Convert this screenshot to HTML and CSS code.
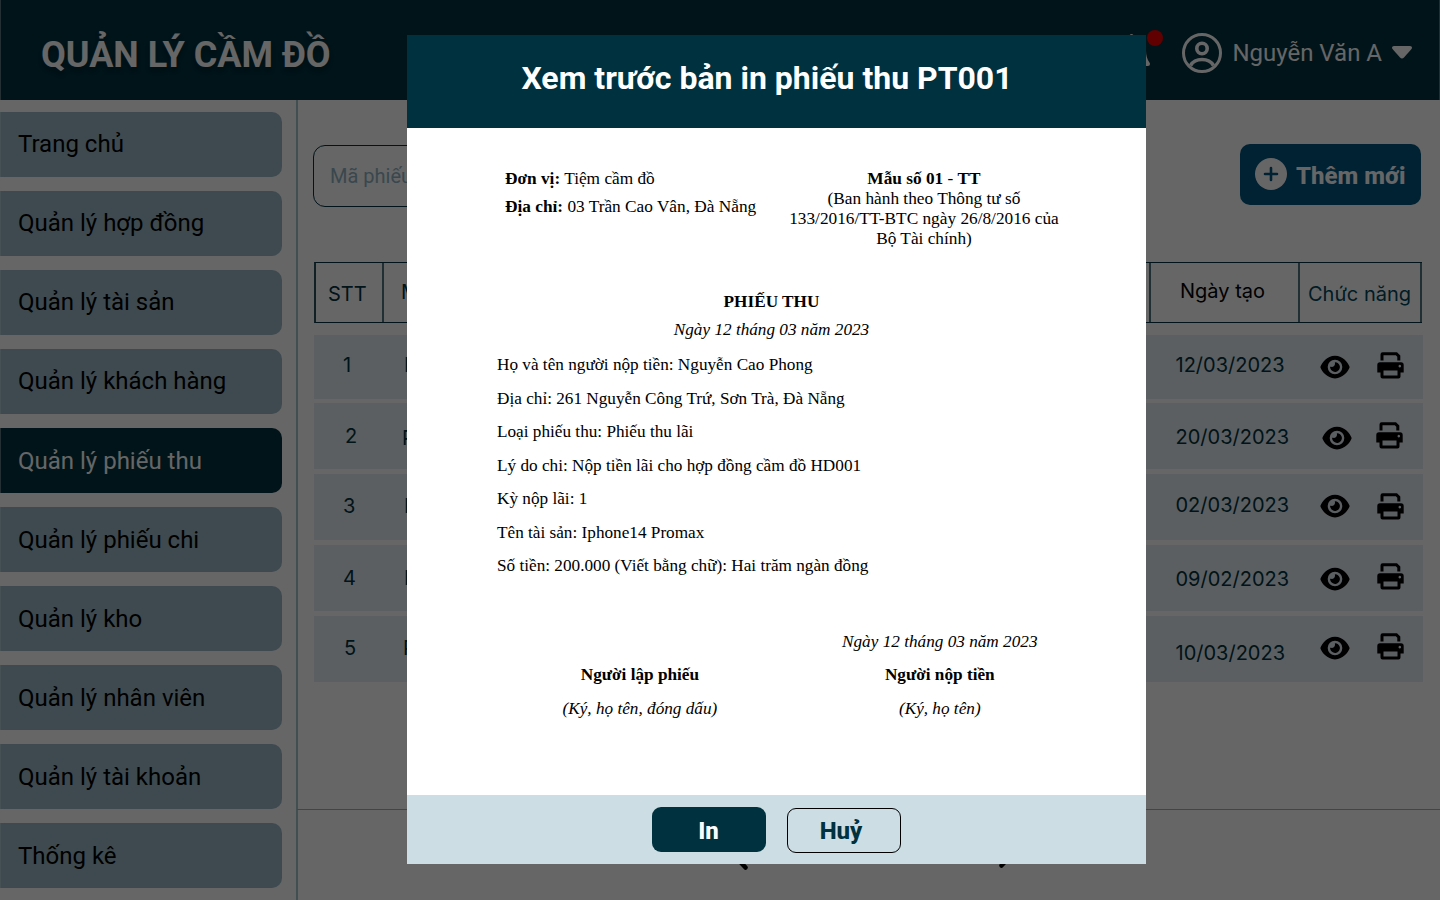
FILE: index.html
```html
<!DOCTYPE html>
<html lang="vi">
<head>
<meta charset="utf-8">
<title>Quản lý cầm đồ</title>
<link rel="stylesheet" href="styles.css">
</head>
<body>
<svg class="defs" width="0" height="0">
  <symbol id="eye" viewBox="0 0 576 512"><path d="M288 32c-81 0-145 37-192 80C49 156 18 208 3 244c-3 8-3 17 0 25 15 35 46 87 93 131 47 43 111 80 192 80s145-37 192-80c47-44 78-96 93-131 3-8 3-17 0-25-15-36-46-88-93-132-47-43-111-80-192-80zM144 256a144 144 0 1 1 288 0 144 144 0 1 1-288 0zm144-64c0 35-29 64-64 64-7 0-14-1-20-3-6-2-12 1-12 7 0 7 1 14 3 21 14 51 67 82 118 68s82-67 68-118c-11-41-48-69-89-71-6 0-9 6-7 12 2 6 3 13 3 20z"/></symbol>
  <symbol id="printer" viewBox="0 0 27 27"><path fill-rule="evenodd" d="M3.500 8.600V2.500Q3.500 .3 5.700 .3H20L23.300 3.600V8.600H20.300V4.800L18.800 3.300H6.500V8.600ZM3 10.200H24Q26.700 10.200 26.700 13V20.500H23.500V24.500Q23.500 26.500 21.500 26.500H5.500Q3.500 26.500 3.500 24.500V20.500H.3V13Q.3 10.200 3 10.200ZM6.500 18.500V23.500H20.500V18.500ZM22.800 12.800a1.300 1.300 0 1 0 .01 0Z"/></symbol>
</svg>
<div class="app">
  <header class="topbar">
    <h1 class="brand">QUẢN LÝ CẦM ĐỒ</h1>
    <div class="user">
      <div class="bell">
        <svg width="38" height="38" viewBox="0 0 38 38" fill="none" stroke="#fff" stroke-width="4" stroke-linejoin="round" stroke-linecap="round"><path d="M17.500 2v3M19 5C11 5 8 11 8 17c0 6-2 9-5 13h31c-3-4-4-7-4-13 0-6-3-12-11-12zM15 35h8"/></svg>
        <span class="dot"></span>
      </div>
      <svg class="avatar" width="40" height="40" viewBox="0 0 40 40" fill="none" stroke="#fff"><circle cx="20" cy="20" r="18.500" stroke-width="3"/><circle cx="20" cy="15.500" r="5.200" stroke-width="3.600"/><path d="M8.500 32.500Q12 26.500 20 26.500T31.500 32.500" stroke-width="3.600"/></svg>
      <span class="name">Nguyễn Văn A</span>
      <svg class="caret" width="20" height="13" viewBox="0 0 20 13"><path d="M2 0H18Q21 .5 19.500 3L12 11.500Q10 13.500 8 11.500L.5 3Q-1 .5 2 0Z" fill="#fff"/></svg>
    </div>
  </header>
  <div class="body">
    <nav class="side">
      <a class="item">Trang chủ</a>
      <a class="item">Quản lý hợp đồng</a>
      <a class="item">Quản lý tài sản</a>
      <a class="item">Quản lý khách hàng</a>
      <a class="item active">Quản lý phiếu thu</a>
      <a class="item">Quản lý phiếu chi</a>
      <a class="item">Quản lý kho</a>
      <a class="item">Quản lý nhân viên</a>
      <a class="item">Quản lý tài khoản</a>
      <a class="item">Thống kê</a>
    </nav>
    <main class="main">
      <div class="tools">
        <div class="search">Mã phiếu</div>
        <button class="add"><svg width="32" height="32" viewBox="0 0 32 32"><circle cx="16" cy="16" r="16" fill="#fff"/><path d="M16 10v12M10 16h12" stroke="#00557f" stroke-width="2.600" stroke-linecap="round"/></svg><span>Thêm mới</span></button>
      </div>
      <div class="thead">
        <div class="th stt">STT</div><div class="th code">Mã</div><div class="th date">Ngày tạo</div><div class="th act">Chức năng</div>
      </div>
      <div class="rows">
        <div class="row r1"><span class="n">1</span><span class="c">PT001</span><span class="d">12/03/2023</span><svg class="eye"><use href="#eye"/></svg><svg class="print"><use href="#printer"/></svg></div>
        <div class="row r2"><span class="n">2</span><span class="c">PT002</span><span class="d">20/03/2023</span><svg class="eye"><use href="#eye"/></svg><svg class="print"><use href="#printer"/></svg></div>
        <div class="row r3"><span class="n">3</span><span class="c">PT003</span><span class="d">02/03/2023</span><svg class="eye"><use href="#eye"/></svg><svg class="print"><use href="#printer"/></svg></div>
        <div class="row r4"><span class="n">4</span><span class="c">PT004</span><span class="d">09/02/2023</span><svg class="eye"><use href="#eye"/></svg><svg class="print"><use href="#printer"/></svg></div>
        <div class="row r5"><span class="n">5</span><span class="c">PT005</span><span class="d">10/03/2023</span><svg class="eye"><use href="#eye"/></svg><svg class="print"><use href="#printer"/></svg></div>
      </div>
      <div class="pager">
        <svg width="22" height="40" viewBox="0 0 22 40"><path d="M19.500 2.500L3 20L19.500 37.500"/></svg>
        <svg class="next" width="22" height="40" viewBox="0 0 22 40"><path d="M2.500 2.500L19 20L2.500 37.500"/></svg>
      </div>
    </main>
  </div>
</div>
<div class="overlay">
  <section class="modal">
    <h2 class="mhead">Xem trước bản in phiếu thu PT001</h2>
    <div class="doc">
      <div class="dtop">
        <div class="unit"><p><b>Đơn vị:</b> Tiệm cầm đồ</p><p><b>Địa chỉ:</b> 03 Trần Cao Vân, Đà Nẵng</p></div>
        <div class="form"><b>Mẫu số 01</b> - <b>TT</b><br>(Ban hành theo Thông tư số<br>133/2016/TT-BTC ngày 26/8/2016 của<br>Bộ Tài chính)</div>
      </div>
      <div class="dtitle"><b>PHIẾU THU</b><i>Ngày 12 tháng 03 năm 2023</i></div>
      <div class="lines">
        <p>Họ và tên người nộp tiền: Nguyễn Cao Phong</p>
        <p>Địa chỉ: 261 Nguyễn Công Trứ, Sơn Trà, Đà Nẵng</p>
        <p>Loại phiếu thu: Phiếu thu lãi</p>
        <p>Lý do chi: Nộp tiền lãi cho hợp đồng cầm đồ HD001</p>
        <p>Kỳ nộp lãi: 1</p>
        <p>Tên tài sản: Iphone14 Promax</p>
        <p>Số tiền: 200.000 (Viết bằng chữ): Hai trăm ngàn đồng</p>
      </div>
      <div class="signs">
        <div class="sign left"><b>Người lập phiếu</b><i>(Ký, họ tên, đóng dấu)</i></div>
        <div class="sign"><i>Ngày 12 tháng 03 năm 2023</i><b>Người nộp tiền</b><i>(Ký, họ tên)</i></div>
      </div>
    </div>
    <footer class="mfoot"><button class="btn ok">In</button><button class="btn cancel">Huỷ</button></footer>
  </section>
</div>
</body>
</html>
```

FILE: styles.css
```css
* { box-sizing: border-box; margin: 0; padding: 0; }
body { width: 1440px; height: 900px; overflow: hidden; background: #fff; font-family: Roboto, sans-serif; }
button { font-family: inherit; border: 0; }
.defs { position: absolute; }
.app { width: 1440px; height: 900px; display: flex; flex-direction: column; }
.topbar { height: 100px; flex: none; background: #003240; border: solid #57757f; border-width: 0 1px; display: flex; justify-content: space-between; align-items: center; padding: 5px 27px 0 40px; }
.brand { color: #fff; font-size: 36px; line-height: 44px; font-weight: 700; padding-top: 4px; text-shadow: 0 4px 4px rgba(0,0,0,.25); }
.user { display: flex; align-items: center; }
.bell { position: relative; width: 38px; height: 38px; margin-right: 30px; }
.dot { position: absolute; left: 33px; top: -4px; width: 16px; height: 16px; border-radius: 50%; background: #f00000; }
.name { color: #fff; font-size: 24px; line-height: 30px; margin: 0 10px; }
.caret { margin-top: -1px; }
.body { flex: 1; display: flex; min-height: 0; }
.side { width: 297.500px; flex: none; border-right: 2px solid #a3c4cd; padding-top: 12px; display: flex; flex-direction: column; gap: 14px; }
.item { width: 282px; height: 65px; flex: none; border-radius: 0 10px 10px 0; background: #9bbac7; border-left: 1px solid #aecad4; color: #000; font-size: 24px; line-height: 64px; padding-left: 17px; }
.item:nth-child(n+5) { line-height: 66px; }
.item.active { background: #003240; color: #fff; border-left-color: #57757f; }
.main { flex: 1; display: flex; flex-direction: column; margin-left: -.5px; }
.tools { display: flex; justify-content: space-between; padding: 44px 19px 0 16px; height: 162px; flex: none; }
.search { width: 400px; height: 62px; margin-top: 1px; border: 1px solid #003240; border-radius: 12px; padding-left: 16px; font-size: 20px; line-height: 61px; color: #8fb3c3; }
.add { width: 181px; height: 61px; border-radius: 10px; background: #00557f; color: #fff; font-size: 24px; font-weight: 800; display: flex; align-items: center; gap: 9px; padding-left: 15px; }
.add span { padding-top: 2px; }
.add svg { margin-top: -1px; }
.thead { width: 1108px; height: 61px; margin-left: 17px; flex: none; display: grid; grid-template-columns: 68px 767px 149px 122px; border: solid #003240; border-width: 1px 0 1px 2px; border-left-color: #28505c; font-family: Inter, sans-serif; font-size: 20px; line-height: 24px; color: #00323f; }
.th { padding: 19px 0 0 12px; border-right: 2px solid #52757f; }
.code { padding: 17px 0 0 17px; }
.date { padding: 16px 0 0 29px; color: #000; }
.act { padding: 19px 0 0 8px; border-right-color: #52757f; color: #00485c; }
.rows { margin: 12px 0 0 17px; display: flex; flex-direction: column; gap: 5px; }
.row { width: 1109px; height: 66px; background: #e3edf5; display: grid; grid-template-columns: 88px 773.500px 144.500px 56.500px 46.500px; align-items: start; font-family: Inter, sans-serif; font-size: 20px; line-height: 24px; color: #00323f; }
.n { padding-left: 28px; }
.c { padding-left: 2px; }
.eye { width: 30px; height: 26px; }
.print { width: 27px; height: 27px; }
.r1 { height: 64px; margin-bottom: -1px; }
.r1 .n, .r1 .c, .r1 .d { margin-top: 18px; }
.r1 .n { margin-left: 1px; }
.r1 .eye { margin-top: 19px; } .r1 .print { margin-top: 17px; }
.r2 .n { margin: 21px 0 0 3px; } .r2 .c { margin: 23px 0 0 -2px; } .r2 .d { margin-top: 22px; }
.r2 .eye { margin: 22px 0 0 2px; } .r2 .print { margin: 19px 0 0 -1px; }
.r3 .n { margin: 20px 0 0 1px; } .r3 .c { margin-top: 20px; } .r3 .d { margin-top: 19px; }
.r3 .eye { margin-top: 19px; } .r3 .print { margin-top: 19px; }
.r4 .n { margin: 21px 0 0 1px; } .r4 .c { margin-top: 21px; } .r4 .d { margin-top: 22px; }
.r4 .eye { margin-top: 21px; } .r4 .print { margin-top: 18px; }
.r5 .n { margin: 20px 0 0 2px; } .r5 .c { margin: 20px 0 0 -1px; } .r5 .d { margin-top: 25px; }
.r5 .eye { margin-top: 19px; } .r5 .print { margin-top: 17px; }
.pager { margin-top: auto; height: 91px; flex: none; border-top: 1px solid #8fb3c3; display: flex; justify-content: space-between; padding: 20px 419px 0 429px; }
.pager path { fill: none; stroke: #000; stroke-width: 4.500; stroke-linecap: round; }
.next { margin-top: -2px; }
.overlay { position: absolute; left: 0; top: 0; width: 1440px; height: 900px; background: rgba(0,0,0,.6); padding: 35px 0 0 407px; }
.modal { width: 739px; height: 829px; background: #fff; display: flex; flex-direction: column; }
.mhead { height: 93px; flex: none; background: #00313f; color: #fff; font-size: 32px; font-weight: 700; line-height: 87px; text-align: center; padding-right: 19px; }
.doc { flex: 1; font-family: "Liberation Serif", serif; font-size: 17.220px; line-height: 20px; color: #000; padding: 41px 84px 0 90px; }
.dtop { display: flex; justify-content: space-between; height: 123px; padding-left: 8px; font-size: 17.300px; }
.unit { display: flex; flex-direction: column; gap: 8px; white-space: nowrap; }
.form { width: 276px; text-align: center; white-space: nowrap; }
.dtitle { display: flex; flex-direction: column; align-items: center; gap: 8px; width: 549px; }
.lines { margin-top: 15px; display: flex; flex-direction: column; gap: 13.500px; }
.signs { display: flex; justify-content: space-between; align-items: flex-end; margin-top: 55.500px; padding: 0 24.500px 0 65.500px; }
.sign { display: flex; flex-direction: column; align-items: center; gap: 13.500px; }
.mfoot { height: 69px; flex: none; background: #ccdde4; display: flex; justify-content: center; gap: 21px; padding-top: 12px; }
.btn { width: 114px; height: 45px; border-radius: 9px; font-size: 24px; font-weight: 800; }
.ok { background: #00313f; color: #fff; padding: 2px 1px 0 0; }
.cancel { margin-top: 1px; padding-right: 6px; background: none; border: 1px solid #000; color: #00313f; }
```
